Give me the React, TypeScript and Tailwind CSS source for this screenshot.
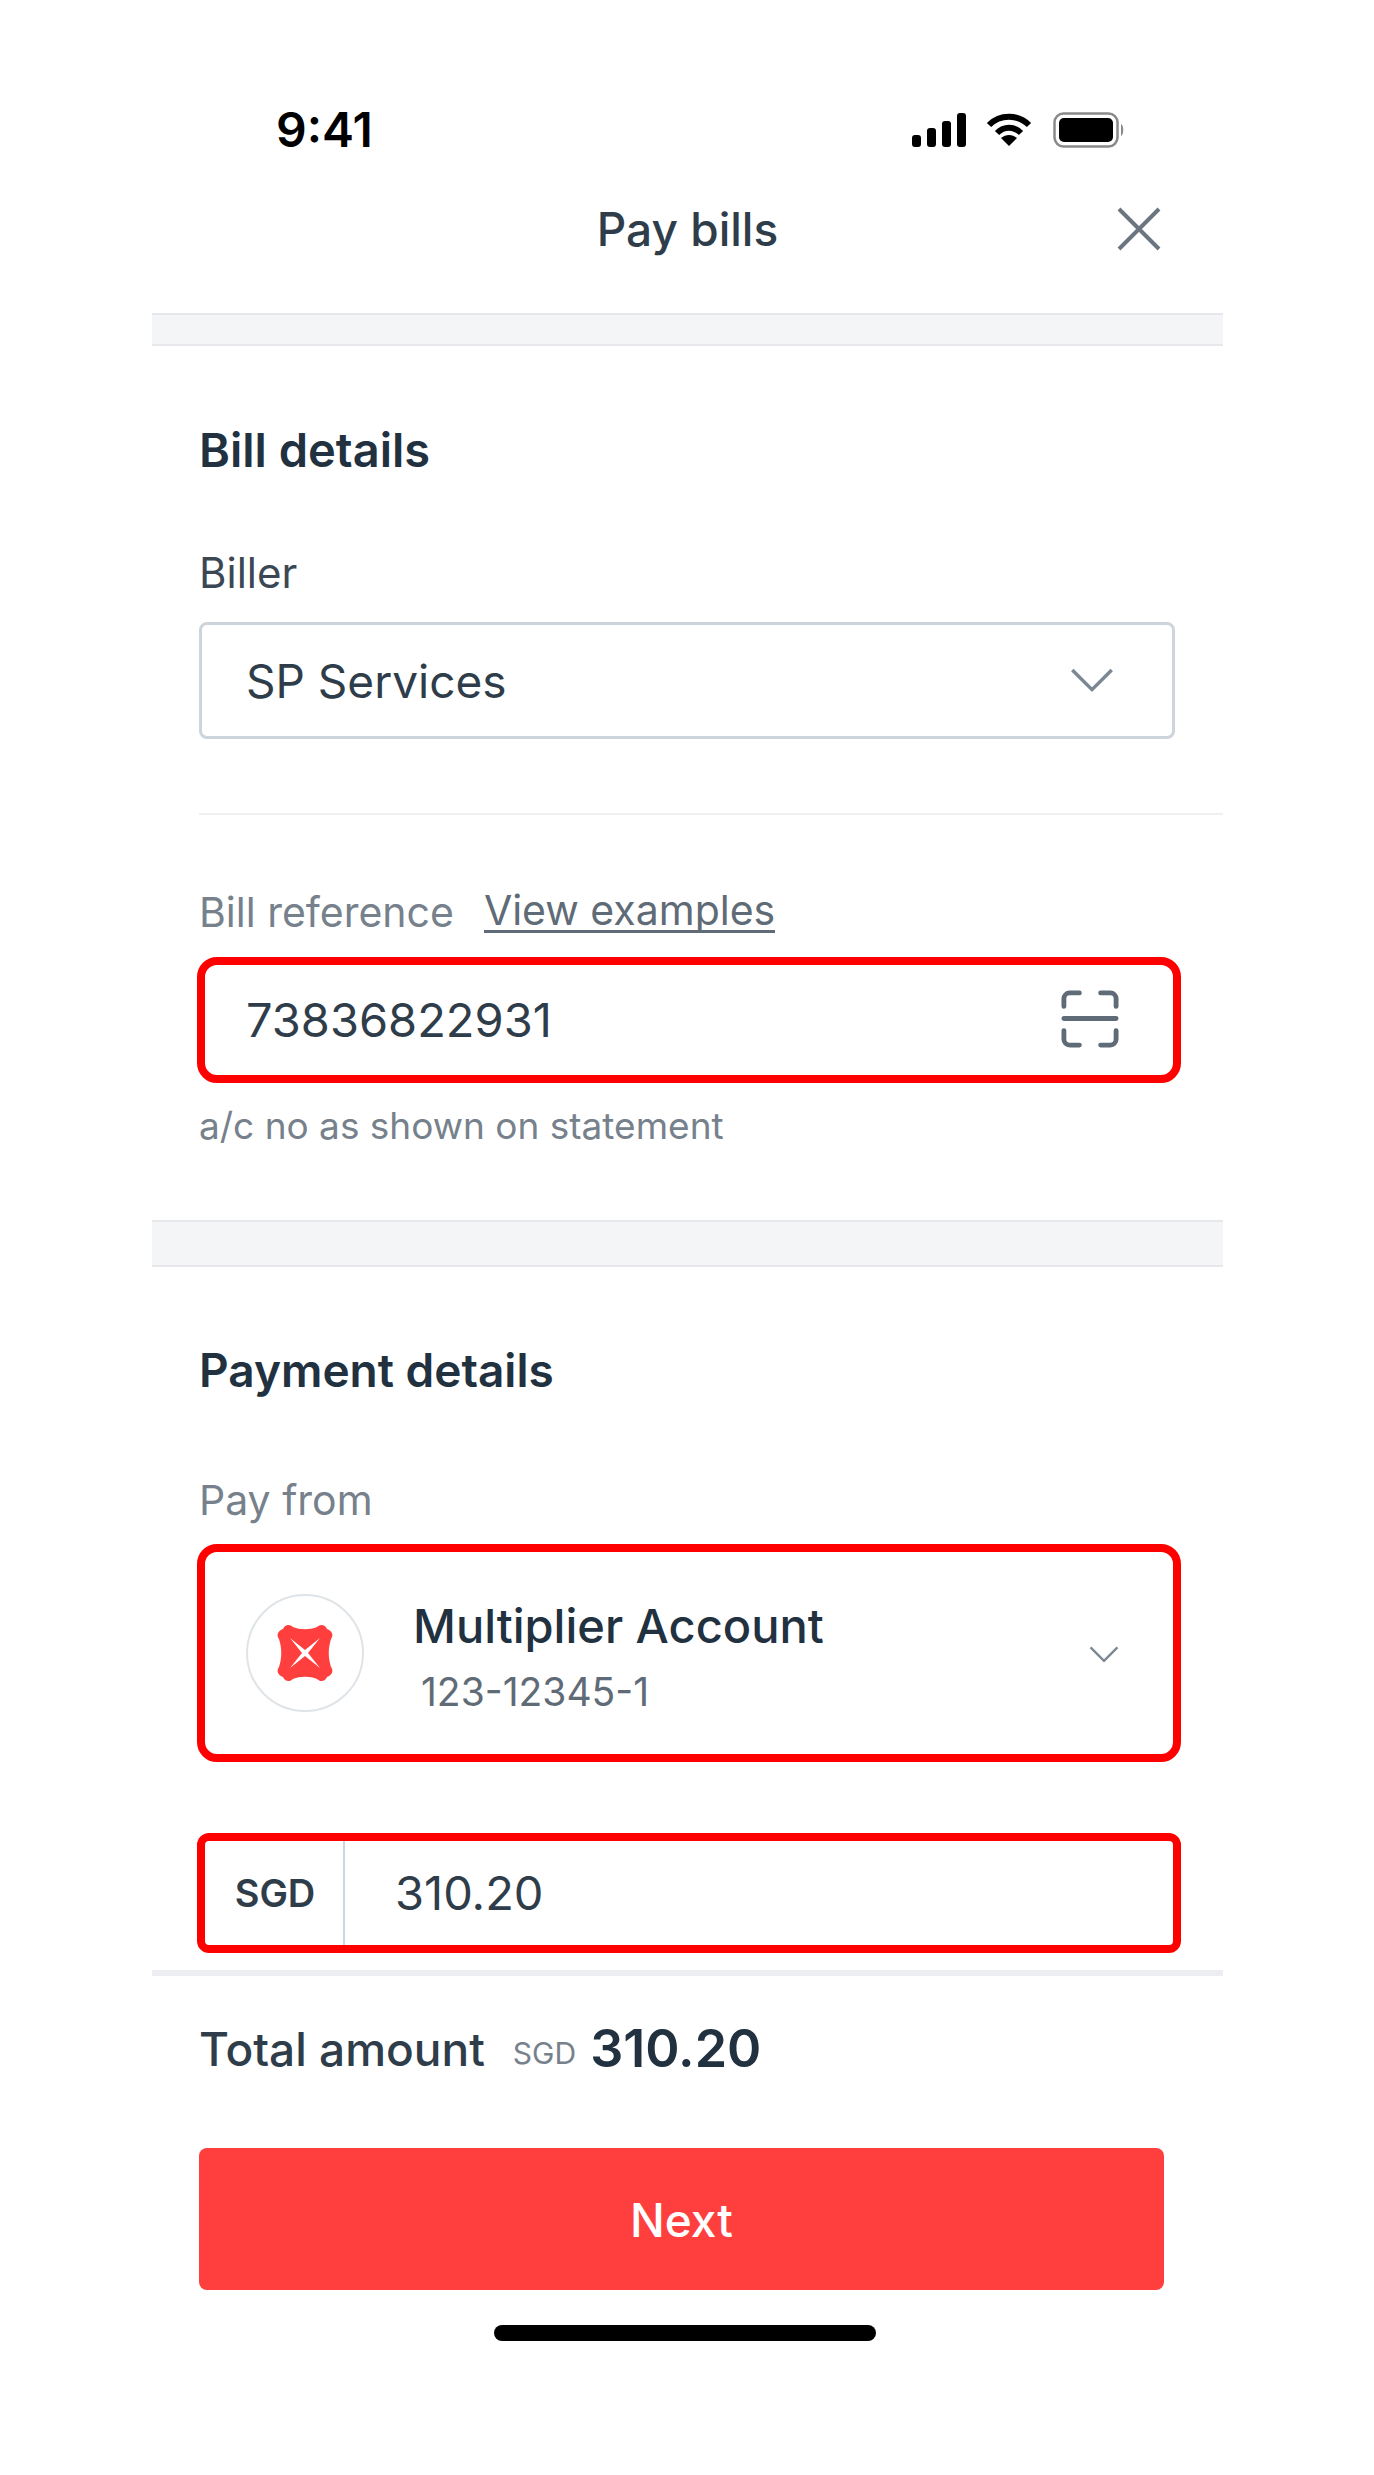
import React from "react";

const FONT = "font-['Inter','Noto_Sans',sans-serif]";

/* ---------------- ICONS ---------------- */

const StatusIcons: React.FC = () => (
  <div className="mt-[3px] flex items-center gap-[19px]">
    <svg width="54" height="34" viewBox="0 0 54 34" fill="#000">
      <rect x="0" y="22" width="9" height="12" rx="3" />
      <rect x="15" y="15" width="9" height="19" rx="3" />
      <rect x="30" y="8" width="9" height="26" rx="3" />
      <rect x="45" y="0" width="9" height="34" rx="3" />
    </svg>
    <svg width="48" height="34" viewBox="0 0 46 34" fill="none" stroke="#000" strokeWidth="6">
      <path d="M3 12 C14 1 32 1 43 12" />
      <path d="M11 20 C18 13 28 13 35 20" />
      <path d="M23 33 L15 25 C20 21 26 21 31 25 Z" fill="#000" stroke="none" />
    </svg>
    <svg width="74" height="36" viewBox="0 0 72 36" fill="none">
      <rect x="1.5" y="1.5" width="63" height="33" rx="9" stroke="#8a8a8a" strokeWidth="2.5" />
      <rect x="6" y="6" width="54" height="24" rx="5" fill="#000" />
      <path d="M68 12 C71 13 71 23 68 24 Z" fill="#8a8a8a" />
    </svg>
  </div>
);

const CloseIcon: React.FC = () => (
  <svg width="44" height="44" viewBox="0 0 44 44" fill="none" stroke="#6b7680" strokeWidth="4">
    <path d="M2 2 L42 42 M42 2 L2 42" />
  </svg>
);

const Chevron: React.FC<{ size: number }> = ({ size }) => (
  <svg width={size} height={size * 0.56} viewBox="0 0 44 25" fill="none" stroke="#7b8793" strokeWidth="3.5">
    <path d="M2 2 L22 22 L42 2" />
  </svg>
);

const ScanIcon: React.FC = () => (
  <svg className="mb-[3px]" width="60" height="58" viewBox="0 0 60 60" fill="none" stroke="#5f6b76" strokeWidth="5" strokeLinecap="round">
    <path d="M3 17 V9 a6 6 0 0 1 6-6 H19" />
    <path d="M41 3 H51 a6 6 0 0 1 6 6 V17" />
    <path d="M3 29.5 H57" />
    <path d="M3 42 V51 a6 6 0 0 0 6 6 H19" />
    <path d="M41 57 H51 a6 6 0 0 0 6-6 V42" />
  </svg>
);

const BankLogo: React.FC = () => (
  <svg width="60" height="60" viewBox="0 0 60 60">
    <path
      d="M8 6 C10 1 15 1 18 4 C25 7 35 7 42 4 C45 1 50 1 52 6 C57 8 59 12 56 16 C53 25 53 35 56 44 C59 48 57 52 52 54 C50 59 45 59 42 56 C35 53 25 53 18 56 C15 59 10 59 8 54 C3 52 1 48 4 44 C7 35 7 25 4 16 C1 12 3 8 8 6 Z"
      fill="#ff3e3e"
    />
    <path d="M15 15 L30 27 L45 15 L33 30 L45 45 L30 33 L15 45 L27 30 Z" fill="#fff" />
  </svg>
);

/* ---------------- PARTI ---------------- */

const Band: React.FC<{ className: string }> = ({ className }) => (
  <div className={`bg-[#f4f5f7] border-y-2 border-[#e6e8eb] ${className}`} />
);

const BillDetails: React.FC = () => (
  <section className="pl-[47px]">
    <h2 className="mt-[84px] text-[47px] leading-[40px] font-semibold text-[#22313f]">Bill details</h2>
    <p className="mt-[85px] text-[42px] leading-[36px] text-[#3b4854]">Biller</p>
    <div className="mt-[31px] w-[976px] h-[117px] flex items-center justify-between pl-[44px] pr-[58px] rounded-[8px] border-[3px] border-[#ced4dc]">
      <span className="pt-[2px] text-[46px] text-[#2f3d4a]">SP Services</span>
      <Chevron size={44} />
    </div>
    <div className="mt-[74px] h-[2px] bg-[#eef0f2]" />
    <div className="mt-[75px] flex items-center gap-[30px] text-[41px] leading-[40px] text-[#76818c]">
      <span>Bill reference</span>
      <span className="text-[#5f6b76] border-b-[3px] border-[#5f6b76]">View examples</span>
    </div>
    <div className="mt-[24px] -ml-[2px] w-[984px] h-[126px] flex items-center justify-between pl-[41px] pr-[53px] rounded-[20px] border-[8px] border-[#ff0000]">
      <span className="text-[47px] text-[#2f3d4a]">73836822931</span>
      <ScanIcon />
    </div>
    <p className="mt-[25px] text-[37px] leading-[36px] text-[#76818c]">a/c no as shown on statement</p>
  </section>
);

const PaymentDetails: React.FC = () => (
  <section className="pl-[47px]">
    <h2 className="mt-[83px] text-[46px] leading-[40px] font-semibold text-[#22313f]">Payment details</h2>
    <p className="mt-[92px] text-[41px] leading-[36px] text-[#76818c]">Pay from</p>
    <div className="mt-[26px] -ml-[2px] w-[984px] h-[218px] flex items-center pl-[41px] pr-[54px] rounded-[20px] border-[8px] border-[#ff0000]">
      <div className="w-[118px] h-[118px] shrink-0 flex items-center justify-center rounded-full border-[2px] border-[#dfe4e8]">
        <BankLogo />
      </div>
      <div className="ml-[49px] mt-[6px] flex-1">
        <p className="text-[47px] leading-[50px] font-medium text-[#22313f]">Multiplier Account</p>
        <p className="mt-[21px] ml-[8px] text-[39px] leading-[40px] text-[#5f6b76]">123-12345-1</p>
      </div>
      <span className="mt-[3px]">
        <Chevron size={30} />
      </span>
    </div>
    <div className="mt-[71px] -ml-[2px] w-[984px] h-[120px] flex items-stretch rounded-[12px] border-[8px] border-[#ff0000]">
      <div className="w-[140px] pl-[2px] flex items-center justify-center border-r-[2px] border-[#ced4dc] text-[38px] font-semibold text-[#2f3d4a]">
        SGD
      </div>
      <span className="ml-[50px] self-center text-[47px] text-[#2f3d4a]">310.20</span>
    </div>
  </section>
);

const Footer: React.FC = () => (
  <footer>
    <div className="mt-[17px] h-[6px] bg-[#eceef1]" />
    <div className="mt-[48px] pl-[47px] h-[50px] flex items-center text-[#2f3d4a]">
      <span className="text-[46px] font-medium">Total amount</span>
      <span className="ml-[28px] mt-[8px] text-[30px] text-[#76818c]">SGD</span>
      <span className="ml-[14px] text-[52px] font-semibold text-[#22313f]">310.20</span>
    </div>
    <button className="block mt-[74px] ml-[47px] w-[965px] h-[142px] pt-[2px] rounded-[8px] bg-[#ff3e3e] text-[46px] font-medium text-white">
      Next
    </button>
    <div className="mt-[35px] ml-[342px] w-[382px] h-[16px] rounded-full bg-black" />
  </footer>
);

/* ---------------- PAGE ---------------- */

const App: React.FC = () => {
  return (
    <div className={`w-[1374px] h-[2475px] bg-white ${FONT}`}>
      <div className="ml-[152px] w-[1071px]">
        <div className="h-[145px] pt-[109px] pl-[124px] pr-[97px] flex items-start justify-between">
          <span className="text-[48px] leading-[42px] font-semibold text-black">9:41</span>
          <StatusIcons />
        </div>
        <div className="h-[168px] flex items-center justify-center relative">
          <span className="text-[46px] font-medium text-[#2f3d4a]">Pay bills</span>
          <span className="absolute right-[62px] top-[62px]">
            <CloseIcon />
          </span>
        </div>
        <Band className="h-[33px]" />
        <BillDetails />
        <Band className="mt-[76px] h-[47px]" />
        <PaymentDetails />
        <Footer />
      </div>
    </div>
  );
};

export default App;
